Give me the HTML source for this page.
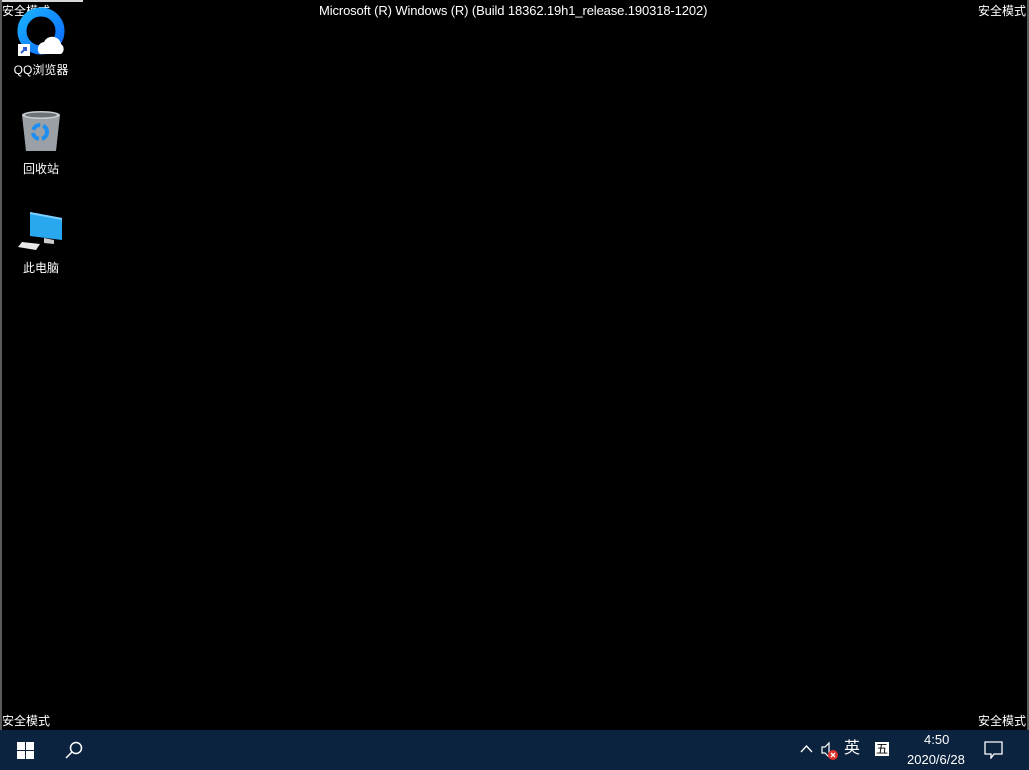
<!DOCTYPE html>
<html><head><meta charset="utf-8"><style>
body{margin:0;width:1029px;height:770px;background:#000;position:relative;overflow:hidden;font-family:"Liberation Sans","Noto Sans CJK SC",sans-serif;color:#fff}
.t{position:absolute;font-size:12px;line-height:14px;white-space:nowrap}
.lbl{position:absolute;font-size:12px;text-align:center;width:80px;text-shadow:1px 1px 1px #000}
.tb{position:absolute;left:0;top:730px;width:1029px;height:40px;background:#0c2340}
</style></head><body>
<div style="position:absolute;left:0;top:0;width:83px;height:2px;background:#d8d8d8"></div>
<div style="position:absolute;left:0;top:0;width:2px;height:730px;background:#5a5a5a"></div>
<div style="position:absolute;left:1027px;top:0;width:2px;height:770px;background:#5a5a5a"></div>
<div class="t" style="left:2px;top:4px">安全模式</div>
<div class="t" style="left:319px;top:4px;font-size:13px;letter-spacing:-0.12px">Microsoft (R) Windows (R) (Build 18362.19h1_release.190318-1202)</div>
<div class="t" style="left:978px;top:4px">安全模式</div>
<div class="t" style="left:2px;top:714px">安全模式</div>
<div class="t" style="left:978px;top:714px">安全模式</div>

<svg style="position:absolute;left:16px;top:6px" width="52" height="52" viewBox="0 0 52 52">
<defs><linearGradient id="g" x1="0" y1="0" x2="1" y2="1"><stop offset="0" stop-color="#1ab0ff"/><stop offset="1" stop-color="#0a6cff"/></linearGradient></defs>
<circle cx="25" cy="25" r="19" fill="none" stroke="url(#g)" stroke-width="9"/>
<path d="M24 48 a7 7 0 0 1 4 -12 a9 9 0 0 1 17 2 a6 6 0 0 1 0 10 z" fill="#fff"/>
<rect x="2" y="38" width="12" height="12" fill="#fff"/><path d="M5 47 L10 42 M7 42 H10 V45" stroke="#2b5cd0" stroke-width="2" fill="none"/>
</svg>
<div class="lbl" style="left:1px;top:61px">QQ浏览器</div>

<svg style="position:absolute;left:20px;top:109px" width="42" height="44" viewBox="0 0 42 44">
<path d="M2 6 L40 6 L36 42 L6 42 Z" fill="#9aa0a6"/><ellipse cx="21" cy="6" rx="19" ry="4" fill="#c8ccd0"/>
<ellipse cx="21" cy="6" rx="16" ry="2.5" fill="#6d7277"/>
<circle cx="20" cy="23" r="7" fill="none" stroke="#1e8ff0" stroke-width="4" stroke-dasharray="9 3"/>
</svg>
<div class="lbl" style="left:1px;top:160px">回收站</div>

<svg style="position:absolute;left:18px;top:210px" width="46" height="42" viewBox="0 0 46 42">
<path d="M12 2 L44 8 L44 30 L12 26 Z" fill="#29a8f0"/><path d="M12 2 L44 8 L44 10 L12 4Z" fill="#7fd0ff"/>
<path d="M26 28 L36 30 L36 34 L26 33Z" fill="#ccc"/>
<path d="M4 32 L22 34 L18 40 L0 37Z" fill="#e8e8e8"/>
</svg>
<div class="lbl" style="left:1px;top:259px">此电脑</div>

<div class="tb">
<svg style="position:absolute;left:17px;top:12px" width="17" height="17" viewBox="0 0 17 17" fill="#fff"><rect x="0" y="0" width="8" height="8"/><rect x="9" y="0" width="8" height="8"/><rect x="0" y="9" width="8" height="8"/><rect x="9" y="9" width="8" height="8"/></svg>
<svg style="position:absolute;left:65px;top:11px" width="18" height="18" viewBox="0 0 18 18" fill="none" stroke="#fff" stroke-width="1.5"><circle cx="11" cy="7" r="5.5"/><path d="M7 11 L1 17"/></svg>
<svg style="position:absolute;left:800px;top:14px" width="13" height="10" viewBox="0 0 13 10" fill="none" stroke="#fff" stroke-width="1.3"><path d="M1 8 L6.5 2 L12 8"/></svg>
<svg style="position:absolute;left:821px;top:11px" width="20" height="20" viewBox="0 0 20 20"><path d="M1 6 H4 L8 2 V16 L4 12 H1Z" fill="none" stroke="#fff" stroke-width="1.2"/><circle cx="12" cy="14" r="5" fill="#e0302a"/><path d="M10 12 L14 16 M14 12 L10 16" stroke="#fff" stroke-width="1.3"/></svg>
<div class="t" style="left:844px;top:10px;font-size:16px;line-height:18px">英</div>
<div style="position:absolute;left:875px;top:12px;width:14px;height:14px;background:#fff;color:#000;font-size:12px;line-height:14px;text-align:center">五</div>
<div class="t" style="left:924px;top:3px;font-size:13px">4:50</div>
<div class="t" style="left:907px;top:23px;font-size:13px">2020/6/28</div>
<svg style="position:absolute;left:984px;top:11px" width="19" height="18" viewBox="0 0 19 18" fill="none" stroke="#fff" stroke-width="1.3"><path d="M1 1 H18 V13 H10 L7 17 V13 H1Z"/></svg>
</div>
</body></html>
